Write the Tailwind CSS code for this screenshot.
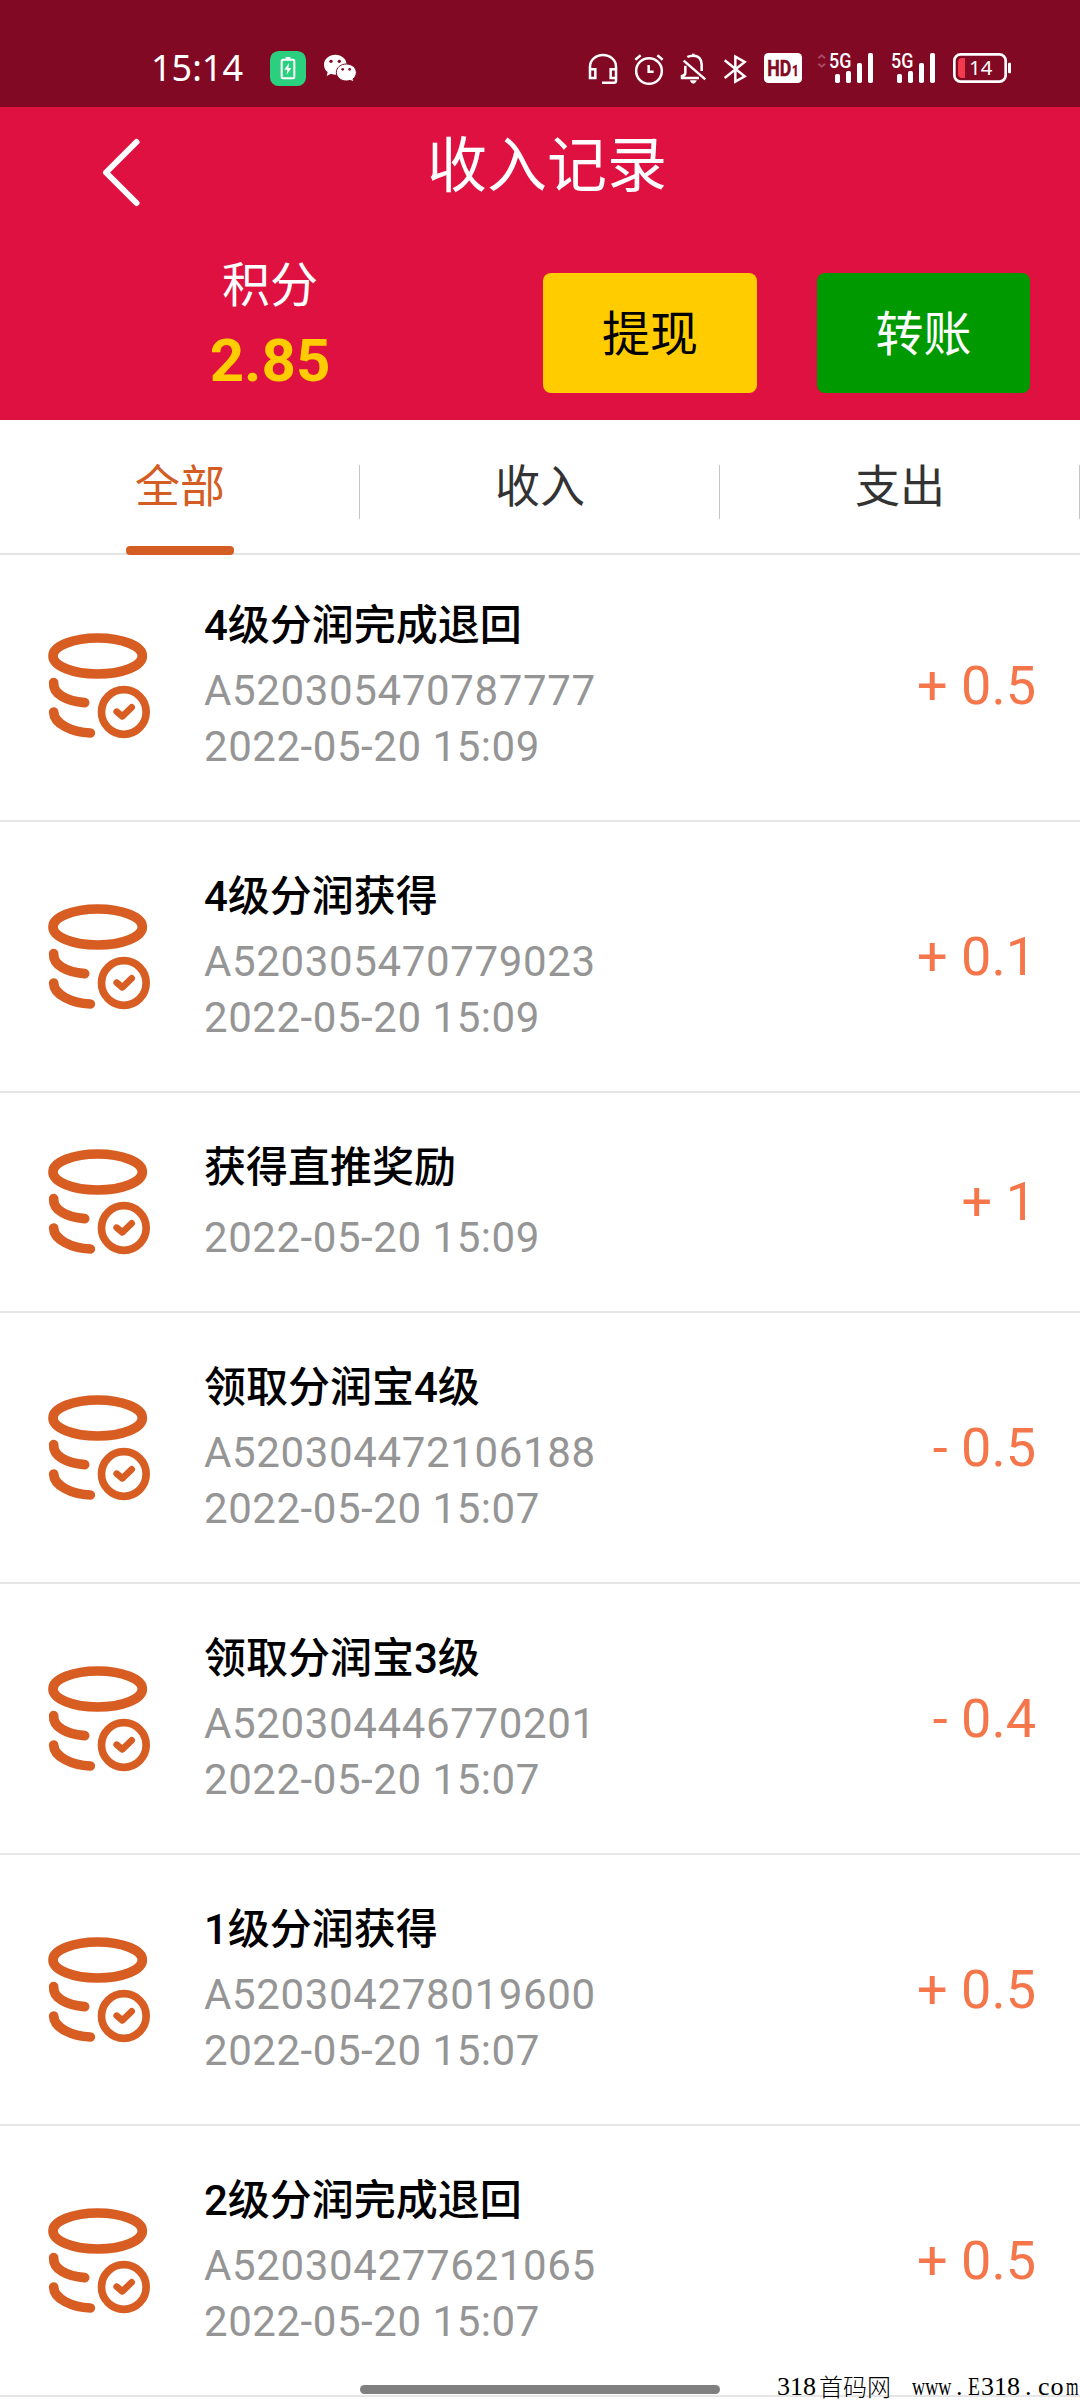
<!DOCTYPE html>
<html lang="zh-CN">
<head>
<meta charset="utf-8">
<title>收入记录</title>
<script src="https://cdn.jsdelivr.net/npm/@tailwindcss/browser@4"></script>
</head>
<body class="bg-white">
<div class="relative flex h-[2400px] w-[1080px] flex-col overflow-hidden bg-white font-[Roboto,'Noto_Sans_CJK_SC',sans-serif]">

  <!-- status bar -->
  <div class="flex h-[107px] shrink-0 items-start bg-[#820924] pt-[50px] text-white">
    <div class="ml-[151px] w-[119px] font-['Noto_Sans',sans-serif] text-[36px] leading-[35px]">15:14</div>
    <svg class="h-9 w-9" viewBox="420 60 108 108"><rect x="420" y="63" width="108" height="105" rx="26" fill="#2bd07f"/><rect x="455" y="89" width="38" height="56" rx="4" fill="none" stroke="#fff" stroke-width="6"/><path d="M467 81h14v8h-14z" fill="#fff"/><path d="M477 99l-14 20h9l-2 15 14-20h-9z" fill="#fff"/></svg>
    <svg class="ml-[17px] h-9 w-[34px]" viewBox="579 60 102 108" fill="#fff"><path d="M616 74c-19 0-34 13-34 30 0 9 4 17 11 22l-3 12 13-7c4 2 9 3 14 3 18 0 33-13 33-30s-15-30-34-30z"/><path d="M649 102c-17 0-30 11-30 25s13 26 30 26c4 0 8-1 12-2l10 5-2-9c6-5 10-12 10-19 0-15-13-26-30-26z" stroke="#820924" stroke-width="3"/><g fill="#820924"><circle cx="603" cy="94" r="5"/><circle cx="628" cy="94" r="5"/><circle cx="638" cy="118" r="4"/><circle cx="659" cy="118" r="4"/></g></svg>

    <svg class="ml-[231px] h-9 w-[30px]" viewBox="54 60 90 108" fill="none" stroke="#fff" stroke-width="7.5"><path d="M60 118v-8a39 35 0 0 1 78 0v42q0 6-6 6H96M60 118v26h16v-26zM138 118h-16v26h16"/></svg>
    <svg class="ml-4 h-9 w-[30px]" viewBox="192 60 90 108" fill="none" stroke="#fff" stroke-width="7.5"><circle cx="237" cy="123" r="38.500"/><path d="M236 105v20h15M196 89l16-13M278 89l-16-13"/></svg>
    <svg class="ml-4 h-9 w-[27px]" viewBox="330 60 81 108" fill="none" stroke="#fff" stroke-width="7.5"><path d="M341 92l65 56M352 81q6-4 17-4 25 0 26 26v20M346 107v21q0 8-10 10v6h51"/><path d="M370 71v5"/><path d="M360 151h20q-3 10-10 10t-10-10z" fill="#fff" stroke="none"/></svg>
    <svg class="ml-4 h-9 w-6" viewBox="459 60 72 108" fill="none" stroke="#fff" stroke-width="7.5"><path d="M464 91l60 48-28 16V80l28 16-60 48"/></svg>
    <svg class="ml-[17px] h-9 w-[38px]" viewBox="582 60 114 108"><rect x="582" y="69" width="114" height="90" rx="13" fill="#fff"/><g fill="#820924" stroke="#820924" stroke-width="1.5" font-family="Roboto" font-weight="700"><text x="592" y="137" font-size="64" textLength="72" lengthAdjust="spacingAndGlyphs">HD</text><text x="666" y="137" font-size="42" textLength="20" lengthAdjust="spacingAndGlyphs">1</text></g></svg>
    <svg class="ml-[15px] h-9 w-14" viewBox="51 60 168 108" fill="#fff"><path d="M55 85l10-9 10 9M55 101l10 9 10-9" fill="none" stroke="#a84a60" stroke-width="6"/><text x="87" y="113" font-family="Roboto" font-weight="500" font-size="58" textLength="67" lengthAdjust="spacingAndGlyphs">5G</text><rect x="105" y="132" width="15" height="27" rx="5"/><rect x="138" y="123" width="15" height="36" rx="5"/><rect x="171" y="99" width="15" height="60" rx="5"/><rect x="204" y="69" width="15" height="90" rx="5"/></svg>
    <svg class="ml-[18px] h-9 w-11" viewBox="273 60 132 108" fill="#fff"><text x="273" y="113" font-family="Roboto" font-weight="500" font-size="58" textLength="67" lengthAdjust="spacingAndGlyphs">5G</text><rect x="291" y="132" width="15" height="27" rx="5"/><rect x="324" y="123" width="15" height="36" rx="5"/><rect x="357" y="99" width="15" height="60" rx="5"/><rect x="390" y="69" width="15" height="90" rx="5"/></svg>
    <svg class="ml-[18px] h-9 w-[58px]" viewBox="459 60 174 108" fill="#fff"><rect x="463" y="73" width="154" height="82" rx="19" fill="none" stroke="#fff" stroke-width="8"/><rect x="624" y="98" width="9" height="32" rx="3"/><path d="M487 84h8v60h-8q-13 0-13-13V97q0-13 13-13z" fill="#f33a4c"/><text x="507" y="135" font-family="Noto Sans" font-size="60" textLength="70" lengthAdjust="spacingAndGlyphs">14</text></svg>
  </div>

  <!-- header -->
  <header class="flex h-[313px] shrink-0 flex-col bg-[#df1140] text-white">
    <div class="flex h-[115px] items-center">
      <svg class="mt-[15px] ml-[98px] h-[74px] w-[48px]" viewBox="0 0 48 74" fill="none" stroke="#fff" stroke-width="6" stroke-linecap="round" stroke-linejoin="round"><path d="M38.500 7L8 37.500L38.500 68"/></svg>
      <h1 class="ml-[7px] w-[788px] pt-[4px] text-center text-[60px] leading-[60px]">收入记录</h1>
    </div>
    <div class="flex">
      <div class="mt-[34px] flex w-[540px] flex-col items-center">
        <div class="text-[48px] leading-[60px]">积分</div>
        <div class="mt-[10px] text-[60px] leading-[70px] font-bold text-[#ffcc00]">2.85</div>
      </div>
      <button class="mt-[51px] ml-[3px] h-[120px] w-[214px] rounded-[8px] bg-[#ffcc00] pt-[3px] text-[48px] text-black">提现</button>
      <button class="mt-[51px] ml-[60px] h-[120px] w-[213px] rounded-[8px] bg-[#009900] pt-[3px] text-[48px]">转账</button>
    </div>
  </header>

  <!-- tabs -->
  <nav class="flex h-[135px] shrink-0 border-b-2 border-[#e3e3e3] text-[45px] leading-[60px] text-[#333]">
    <div class="relative flex w-[360px] justify-center pt-[38px] text-[#d45d24]">全部
      <span class="absolute -bottom-[2px] left-[126px] h-[9px] w-[108px] rounded-[4px] bg-[#d45d24]"></span>
      <span class="absolute top-[45px] right-0 h-[54px] w-px bg-[#c4c4c4]"></span>
    </div>
    <div class="relative flex w-[360px] justify-center pt-[38px]">收入
      <span class="absolute top-[45px] right-0 h-[54px] w-px bg-[#c4c4c4]"></span>
    </div>
    <div class="relative flex w-[360px] justify-center pt-[38px]">支出
      <span class="absolute top-[45px] right-0 h-[54px] w-px bg-[#c4c4c4]"></span>
    </div>
  </nav>

  <!-- records -->
  <ul id="records" class="-mt-1 flex flex-col"></ul>

  <!-- gesture bar and site credit -->
  <div class="absolute top-[2385px] left-[360px] h-[9px] w-[360px] rounded-full bg-[#808080]"></div>
  <div class="absolute top-[2374px] left-[777px] flex h-[26px] w-[303px] font-['Liberation_Serif',serif] text-[26px] leading-[26px] whitespace-nowrap text-black">
    <span class="w-[40px]">318</span>
    <span class="w-[95px] pl-[2px] font-['Noto_Sans_CJK_SC',sans-serif] text-[24px] leading-[24px] font-light">首码网</span>
    <span class="w-[41px]"><span class="inline-block origin-left scale-x-[0.7]">www</span></span>
    <span class="w-[15px] pl-[3px]">.</span>
    <span class="w-[13px]"><span class="inline-block origin-left scale-x-[0.75]">E</span></span>
    <span class="w-[42px]">318</span>
    <span class="w-[15px] pl-[2px]">.</span>
    <span class="w-[28px] tracking-[1px]">co</span>
    <span class="w-[13px]"><span class="inline-block origin-left scale-x-[0.62]">m</span></span>
  </div>
</div>

<template id="row">
  <li class="flex items-center border-b-2 border-[#e6e6e6]">
    <svg class="ml-[45px] h-[112px] w-[108px] shrink-0" viewBox="45 39 324 336" fill="none" stroke="#d85d22" stroke-linecap="round" stroke-linejoin="round"><ellipse cx="203" cy="117" rx="134" ry="54" stroke-width="29"/><path d="M71 197C69 231 110 253 164 257" stroke-width="29"/><path d="M71 285C72 320 125 346 181 348" stroke-width="29"/><circle cx="281.500" cy="285" r="67" stroke-width="23"/><path d="M260 284l17 14 28-27" stroke-width="20"/></svg>
    <div class="ml-[51px] flex grow flex-col">
      <div data-k="title" class="text-[42px] leading-[58px] font-medium text-black"></div>
      <div data-k="no" class="mt-[8px] text-[42px] leading-[56px] tracking-[0.65px] text-[#959595]"></div>
      <div data-k="date" class="text-[42px] leading-[56px] tracking-[0.55px] text-[#959595]"></div>
    </div>
    <div data-k="amount" class="mr-[44px] text-[54px] leading-[64px] text-[#f4764a]"></div>
  </li>
</template>
<script>
  const records = [
    ['4级分润完成退回', 'A520305470787777', '2022-05-20 15:09', '+ 0.5'],
    ['4级分润获得', 'A520305470779023', '2022-05-20 15:09', '+ 0.1'],
    ['获得直推奖励', '', '2022-05-20 15:09', '+ 1'],
    ['领取分润宝4级', 'A520304472106188', '2022-05-20 15:07', '- 0.5'],
    ['领取分润宝3级', 'A520304446770201', '2022-05-20 15:07', '- 0.4'],
    ['1级分润获得', 'A520304278019600', '2022-05-20 15:07', '+ 0.5'],
    ['2级分润完成退回', 'A520304277621065', '2022-05-20 15:07', '+ 0.5'],
  ];
  const list = document.getElementById('records');
  for (const [title, no, date, amount] of records) {
    const row = document.getElementById('row').content.cloneNode(true);
    row.querySelector('[data-k=title]').textContent = title;
    row.querySelector('[data-k=date]').textContent = date;
    row.querySelector('[data-k=amount]').textContent = amount;
    const noEl = row.querySelector('[data-k=no]');
    if (no) noEl.textContent = no; else noEl.remove();
    row.querySelector('[data-k=date]').classList.toggle('mt-[13px]', !no);
    row.querySelector('li').classList.add(no ? 'h-[271px]' : 'h-[220px]');
    list.append(row);
  }
</script>
</body>
</html>
